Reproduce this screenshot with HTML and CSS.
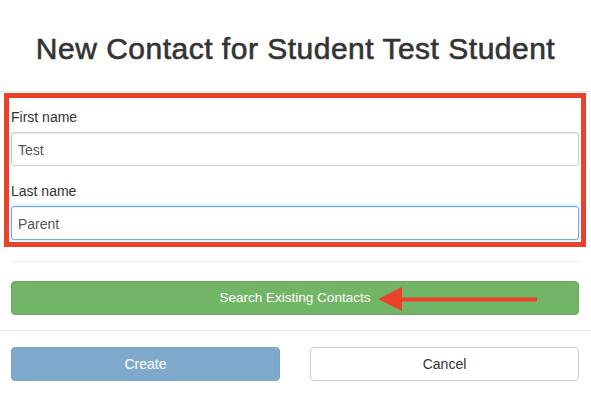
FILE: index.html
```html
<!DOCTYPE html>
<html lang="en">
<head>
<meta charset="UTF-8">
<meta name="viewport" content="width=device-width, initial-scale=1.0">
<title>New Contact</title>
<link rel="stylesheet" href="styles.css">
</head>
<body>
<div class="modal">
  <div class="modal-header">
    <h3 class="modal-title">New Contact for Student Test Student</h3>
  </div>

  <div class="modal-body">
    <div class="highlight">
      <div class="form-group">
        <label for="firstName">First name</label>
        <input id="firstName" class="form-control" type="text" value="Test">
      </div>
      <div class="form-group">
        <label for="lastName">Last name</label>
        <input id="lastName" class="form-control focused" type="text" value="Parent">
      </div>
    </div>

    <hr class="divider">

    <div class="search-row">
      <button class="btn btn-success">Search Existing Contacts</button>
      <svg class="arrow" width="162" height="27" viewBox="0 0 162 27">
        <polygon points="1,13 25,1 25,25" fill="#e9412a"/>
        <rect x="24" y="11.5" width="136" height="4" fill="#e9412a"/>
      </svg>
    </div>
  </div>

  <div class="modal-footer">
    <button class="btn btn-primary" disabled>Create</button>
    <button class="btn btn-default">Cancel</button>
  </div>
</div>
</body>
</html>
```

FILE: styles.css
```css
body {
  font-family: "Liberation Sans", Arial, Helvetica, sans-serif;
  font-size: 14px;
  line-height: 20px;
  color: #333;
  background-color: #fff;
  margin: 0;
  padding: 0;
}
.modal {
  width: 591px;
}
.modal-header {
  padding: 33px 0 26px;
  border-bottom: 1px solid #e5e5e5;
  text-align: center;
}
.modal-title {
  margin: 0;
  font-size: 30px;
  line-height: 32px;
  font-weight: normal;
  letter-spacing: 0.5px;
  -webkit-text-stroke: 0.6px #333;
  color: #333;
}
.modal-body {
  padding: 1px 5px 15px 4px;
}
.highlight {
  border: 5px solid #e9412a;
  padding: 9px 2px 2px;
}
.form-group {
  margin-bottom: 15px;
}
.form-group:last-child {
  margin-bottom: 0;
}
label {
  display: block;
  margin-bottom: 5px;
  font-weight: normal;
}
.form-control {
  display: block;
  box-sizing: border-box;
  width: 100%;
  height: 34px;
  padding: 7px 6px 5px;
  font-family: inherit;
  font-size: 14px;
  line-height: 20px;
  color: #555;
  background-color: #fff;
  border: 1px solid #ccc;
  border-radius: 3px;
  box-shadow: inset 0 1px 1px rgba(0, 0, 0, 0.075);
  outline: none;
}
.form-control.focused {
  border-color: #66afe9;
  box-shadow: inset 0 1px 1px rgba(0, 0, 0, 0.075), 0 0 5px rgba(102, 175, 233, 0.45);
}
.divider {
  margin: 14px 7px 19px;
  border: 0;
  border-top: 1px solid #eee;
}
.search-row {
  position: relative;
  margin: 0 7px;
}
.arrow {
  position: absolute;
  left: 366px;
  top: 5px;
}
.btn {
  display: block;
  box-sizing: border-box;
  width: 100%;
  height: 34px;
  padding: 6px 12px;
  font-family: inherit;
  font-size: 14px;
  line-height: 20px;
  text-align: center;
  border: 1px solid transparent;
  border-radius: 4px;
  cursor: pointer;
}
.btn-success {
  color: #fff;
  background-color: #73b566;
  border-color: #69a95c;
  font-size: 13.5px;
}
.btn-primary {
  color: #fff;
  background-color: #7ea9cd;
  border-color: #7aa5ca;
  cursor: not-allowed;
}
.btn-default {
  color: #333;
  background-color: #fff;
  border-color: #ccc;
}
.modal-footer {
  display: grid;
  grid-template-columns: 1fr 1fr;
  gap: 30px;
  padding: 16px 12px 12px 11px;
  border-top: 1px solid #e5e5e5;
}
```
